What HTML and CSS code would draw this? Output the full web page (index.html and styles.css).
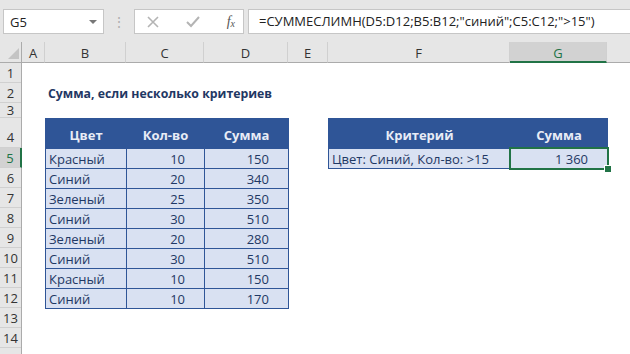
FILE: index.html
```html
<!DOCTYPE html>
<html lang="ru">
<head>
  <meta charset="UTF-8">
  <title>СУММЕСЛИМН</title>
  <link rel="stylesheet" href="styles.css">
</head>
<body>

  <div class="toolbar">
    <div class="namebox">
      <span>G5</span>
      <span class="drop"></span>
    </div>
    <div class="grip">&#8942;</div>
    <div class="fxbox">
      <svg class="ico" width="14" height="14" viewBox="0 0 14 14"><path d="M2 2 L12 12 M12 2 L2 12" stroke="#b4b4b4" stroke-width="1.6" fill="none"/></svg>
      <svg class="ico" width="16" height="14" viewBox="0 0 16 14"><path d="M2 7 L6 11 L14 2" stroke="#b4b4b4" stroke-width="2" fill="none"/></svg>
      <span class="fx"><i>f</i><sub>x</sub></span>
    </div>
    <div class="formula">=СУММЕСЛИМН(D5:D12;B5:B12;"синий";C5:C12;"&gt;15")</div>
  </div>

  <div class="sheet">
    <!-- column headers -->
    <div class="ch corner"><span class="tri"></span></div>
    <div class="ch">A</div>
    <div class="ch">B</div>
    <div class="ch">C</div>
    <div class="ch">D</div>
    <div class="ch">E</div>
    <div class="ch">F</div>
    <div class="ch sel">G</div>
    <div class="ch rest"></div>

    <!-- row headers -->
    <div class="rows">
      <div class="rh">1</div>
      <div class="rh">2</div>
      <div class="rh short">3</div>
      <div class="rh tall">4</div>
      <div class="rh sel">5</div>
      <div class="rh">6</div>
      <div class="rh">7</div>
      <div class="rh">8</div>
      <div class="rh">9</div>
      <div class="rh">10</div>
      <div class="rh">11</div>
      <div class="rh">12</div>
      <div class="rh">13</div>
      <div class="rh">14</div>
      <div class="rh"></div>
    </div>

    <div class="title">Сумма, если несколько критериев</div>

    <table class="data">
      <colgroup><col class="cb"><col class="cc"><col class="cd"></colgroup>
      <tr class="head"><th>Цвет</th><th>Кол-во</th><th>Сумма</th></tr>
      <tr><td>Красный</td><td class="num">10</td><td class="num">150</td></tr>
      <tr><td>Синий</td><td class="num">20</td><td class="num">340</td></tr>
      <tr><td>Зеленый</td><td class="num">25</td><td class="num">350</td></tr>
      <tr><td>Синий</td><td class="num">30</td><td class="num">510</td></tr>
      <tr><td>Зеленый</td><td class="num">20</td><td class="num">280</td></tr>
      <tr><td>Синий</td><td class="num">30</td><td class="num">510</td></tr>
      <tr><td>Красный</td><td class="num">10</td><td class="num">150</td></tr>
      <tr><td>Синий</td><td class="num">10</td><td class="num">170</td></tr>
    </table>

    <table class="data crit">
      <colgroup><col class="cf"><col class="cg"></colgroup>
      <tr class="head"><th>Критерий</th><th>Сумма</th></tr>
      <tr><td>Цвет: Синий, Кол-во: &gt;15</td><td class="num active">1 360<span class="handle"></span></td></tr>
    </table>
  </div>

</body>
</html>
```

FILE: styles.css
```css
body {
  margin: 0;
  width: 630px;
  height: 354px;
  overflow: hidden;
  background: #fff;
  font-family: 'Open Sans', 'Noto Sans', sans-serif;
  color: #222;
}

/* formula bar */
.toolbar {
  height: 42px;
  background: #e6e6e6;
  display: flex;
  align-items: flex-start;
  padding-top: 9px;
  box-sizing: border-box;
}

.namebox {
  margin-left: 3px;
  width: 101px;
  height: 25px;
  box-sizing: border-box;
  background: #fff;
  border: 1px solid #c6c6c6;
  display: flex;
  align-items: center;
  justify-content: space-between;
  padding: 0 6px 0 6px;
  font-size: 13px;
  color: #222;
}

.drop {
  width: 0;
  height: 0;
  border-left: 4px solid transparent;
  border-right: 4px solid transparent;
  border-top: 4px solid #777;
}

.grip {
  width: 30px;
  text-align: center;
  color: #b0b0b0;
  font-size: 14px;
  line-height: 25px;
}

.fxbox {
  width: 110px;
  height: 25px;
  box-sizing: border-box;
  background: #fff;
  border: 1px solid #c6c6c6;
  display: flex;
  align-items: center;
  justify-content: space-between;
  padding: 0 8px 0 11px;
}

.fx {
  font-family: 'Liberation Serif', serif;
  font-size: 14px;
  color: #555;
}

.fx sub {
  font-size: 10px;
  font-style: italic;
  vertical-align: -1px;
}

.formula {
  margin-left: 4px;
  flex: 1;
  height: 25px;
  box-sizing: border-box;
  background: #fff;
  border: 1px solid #c6c6c6;
  border-right: none;
  padding-left: 10px;
  font-size: 13px;
  line-height: 23px;
  white-space: nowrap;
  color: #222;
}

/* sheet grid */
.sheet {
  display: grid;
  grid-template-columns: 22px 23px 81px 78px 84px 40px 182px 97px 1fr;
  grid-template-rows: 21px 20px 20px 15px 30px repeat(10, 20px) 20px;
}

.ch {
  background: #e6e6e6;
  border-bottom: 1px solid #ababab;
  border-right: 1px solid #d0d0d0;
  font-size: 13px;
  color: #333;
  text-align: center;
  line-height: 20px;
  box-sizing: border-box;
  padding-top: 1px;
}

.ch.corner {
  border-right: 1px solid #ababab;
  position: relative;
}

.tri {
  position: absolute;
  right: 2px;
  bottom: 3px;
  width: 0;
  height: 0;
  border-left: 11px solid transparent;
  border-bottom: 11px solid #c4c4c4;
}

.ch.sel {
  background: #d2d2d2;
  color: #217346;
  border-bottom: 2px solid #217346;
}

.ch.rest {
  border-right: none;
}

.rows {
  grid-column: 1;
  grid-row: 2 / -1;
  display: flex;
  flex-direction: column;
  background: #e6e6e6;
  border-right: 1px solid #ababab;
}

.rh {
  height: 20px;
  box-sizing: border-box;
  border-bottom: 1px solid #d0d0d0;
  font-size: 13px;
  color: #333;
  text-align: center;
  line-height: 20px;
  flex-shrink: 0;
}

.rh.short {
  height: 15px;
  line-height: 14px;
}

.rh.tall {
  height: 30px;
  line-height: 38px;
}

.rh.sel {
  background: #d2d2d2;
  color: #217346;
  margin-right: -1px;
  border-right: 2px solid #217346;
}

.title {
  grid-column: 3 / 7;
  grid-row: 3;
  font-weight: bold;
  font-size: 12.3px;
  color: #1f3864;
  padding-left: 3px;
  line-height: 22px;
  white-space: nowrap;
}

.data {
  grid-column: 3 / 6;
  grid-row: 5 / 14;
  border-collapse: collapse;
  font-size: 13px;
  color: #1f3864;
  table-layout: fixed;
  width: 244px;
  align-self: start;
}

.cb { width: 81px; }
.cc { width: 78px; }
.cd { width: 84px; }
.cf { width: 182px; }
.cg { width: 97px; }

.data th {
  background: #2f5597;
  color: #e8ecf6;
  height: 30px;
  padding: 0;
  padding-top: 2px;
  font-weight: bold;
  border: 1px solid #2f5597;
  text-align: center;
  box-sizing: border-box;
}

.data td {
  background: #d9e1f2;
  border: 1px solid #2f5597;
  height: 20px;
  padding: 0 3px;
  box-sizing: border-box;
  white-space: nowrap;
}

.data .num {
  text-align: right;
  padding-right: 19px;
}

.crit {
  grid-column: 7 / 9;
  grid-row: 5 / 7;
  width: 280px;
}

.active {
  position: relative;
}

.active::after {
  content: '';
  position: absolute;
  left: -2px;
  top: -2px;
  right: -2px;
  bottom: -2px;
  border: 2px solid #217346;
}

.handle {
  position: absolute;
  right: -5px;
  bottom: -5px;
  width: 6px;
  height: 6px;
  background: #217346;
  border: 1px solid #fff;
  z-index: 2;
}
```
